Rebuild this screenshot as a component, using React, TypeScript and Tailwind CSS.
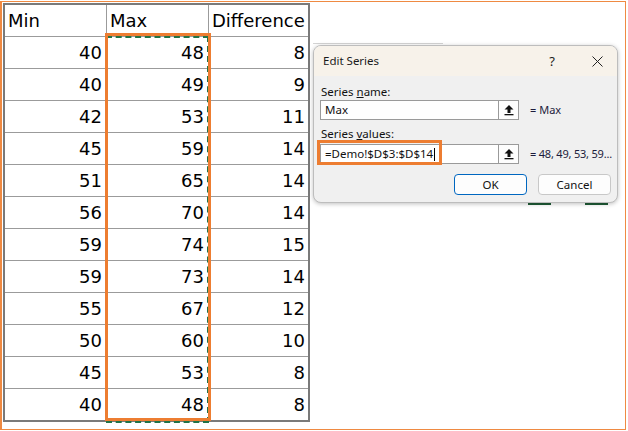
import React from "react";

const rows: [number, number, number][] = [
  [40, 48, 8],
  [40, 49, 9],
  [42, 53, 11],
  [45, 59, 14],
  [51, 65, 14],
  [56, 70, 14],
  [59, 74, 15],
  [59, 73, 14],
  [55, 67, 12],
  [50, 60, 10],
  [45, 53, 8],
  [40, 48, 8],
];

function UpIcon() {
  return (
    <svg width="12" height="12" viewBox="0 0 12 12">
      <polygon points="6,1 10.5,5.5 7.5,5.5 7.5,9 4.5,9 4.5,5.5 1.5,5.5" fill="#111" />
      <rect x="1.5" y="10" width="9" height="1.3" fill="#111" />
    </svg>
  );
}

function Field({ value, cursor }: { value: string; cursor?: boolean }) {
  return (
    <div className="flex h-[20px] w-[199px] shrink-0 items-stretch border border-[#9a9a9a] bg-white">
      <div className="flex flex-1 items-center whitespace-nowrap pl-[4px] text-[11.5px] leading-[16px] text-[#111]">
        <span>{value}</span>
        {cursor && <span className="ml-[1px] inline-block h-[13px] w-[1px] bg-black" />}
      </div>
      <div className="flex w-[20px] items-center justify-center border-l border-[#9a9a9a] bg-[#fdfdfd]">
        <UpIcon />
      </div>
    </div>
  );
}

export default function App() {
  return (
    <div
      className="relative h-[431px] w-[628px] overflow-hidden bg-white"
      style={{ fontFamily: '"DejaVu Sans", sans-serif' }}
    >
      {/* outer orange frame */}
      <div className="absolute left-0 top-[1px] h-[429px] w-[626px] border border-l-2 border-[#ef8a42]" />

      {/* table */}
      <div className="pl-[3px] pt-[3px]">
        <div className="w-[307px] border-2 border-[#7a7a7a] text-[18px] leading-[22px] text-black">
          <div className="flex h-[32px] border-b border-[#9b9b9b]">
            <div className="flex w-[102px] items-center border-r border-[#9b9b9b] pl-[3px]">Min</div>
            <div className="flex w-[102px] items-center border-r border-[#9b9b9b] pl-[3px]">Max</div>
            <div className="flex w-[99px] items-center pl-[3px]">Difference</div>
          </div>
          {rows.map((r, i) => (
            <div
              key={i}
              className={`flex ${i < rows.length - 1 ? "h-[32px] border-b border-[#9b9b9b]" : "h-[31px]"}`}
            >
              <div className="flex w-[102px] items-center justify-end border-r border-[#9b9b9b] pr-[4px]">{r[0]}</div>
              <div className="flex w-[102px] items-center justify-end border-r border-[#9b9b9b] pr-[4px]">{r[1]}</div>
              <div className="flex w-[99px] items-center justify-end pr-[3px]">{r[2]}</div>
            </div>
          ))}
        </div>
      </div>

      {/* green marching ants around Max column */}
      <div className="absolute left-[106px] top-[36px] h-[387px] w-[103px] border-2 border-dashed border-[#217346]" />
      {/* orange highlight around Max column */}
      <div className="absolute left-[105px] top-[33px] h-[388px] w-[106px] border-[3px] border-[#ed7d31]" />

      {/* chart bits behind dialog */}
      <div className="absolute left-[313px] top-[43px] h-[1px] w-[130px] bg-[#d4d4d4]" />
      <div className="absolute left-[528px] top-[202px] h-[3px] w-[23px] bg-[#1f5c36]" />
      <div className="absolute left-[585px] top-[202px] h-[3px] w-[23px] bg-[#1f5c36]" />

      {/* dialog */}
      <div
        className="absolute left-[313px] top-[45px] h-[158px] w-[305px] overflow-hidden rounded-[8px] border border-[#bdbdbd] bg-[#f0f0f0] shadow-[0_1px_4px_rgba(0,0,0,0.25)]"
        style={{ fontFamily: '"Noto Sans", sans-serif' }}
      >
        <div className="flex h-[30px] items-center bg-[#f7f2ea] pl-[9px] pr-[14px] text-[11.5px] leading-[16px] text-[#1a1a1a]">
          <span className="flex-1">Edit Series</span>
          <span className="mr-[37px] text-[13px]">?</span>
          <svg width="11" height="11" viewBox="0 0 11 11">
            <path d="M0.5 0.5 L10.5 10.5 M10.5 0.5 L0.5 10.5" stroke="#222" strokeWidth="1" />
          </svg>
        </div>
        <div className="flex flex-col px-[6px] pt-[8px] text-[11.5px] leading-[16px] text-[#111]">
          <div className="ml-[1px] h-[16px]">
            Series <span className="underline">n</span>ame:
          </div>
          <div className="flex h-[20px] items-center">
            <Field value="Max" />
            <span className="ml-[11px] whitespace-nowrap text-[11px] text-[#1c1c3c]">= Max</span>
          </div>
          <div className="ml-[1px] mt-[6px] h-[16px]">
            Series <span className="underline">v</span>alues:
          </div>
          <div className="mt-[2px] flex h-[20px] items-center">
            <Field value="=Demo!$D$3:$D$14" cursor />
            <span className="ml-[11px] whitespace-nowrap text-[11px] tracking-[-0.2px] text-[#1c1c3c]">= 48, 49, 53, 59...</span>
          </div>
          <div className="mt-[10px] flex justify-end gap-[11px]">
            <div className="flex h-[21px] w-[73px] items-center justify-center rounded-[4px] border border-[#0067c0] bg-[#fdfdfd]">
              OK
            </div>
            <div className="flex h-[21px] w-[73px] items-center justify-center rounded-[4px] border border-[#c8c8c8] bg-[#fdfdfd]">
              Cancel
            </div>
          </div>
        </div>
      </div>

      {/* orange highlight around series values */}
      <div className="absolute left-[317px] top-[140px] h-[25px] w-[125px] border-[3px] border-[#ed7d31]" />
    </div>
  );
}
